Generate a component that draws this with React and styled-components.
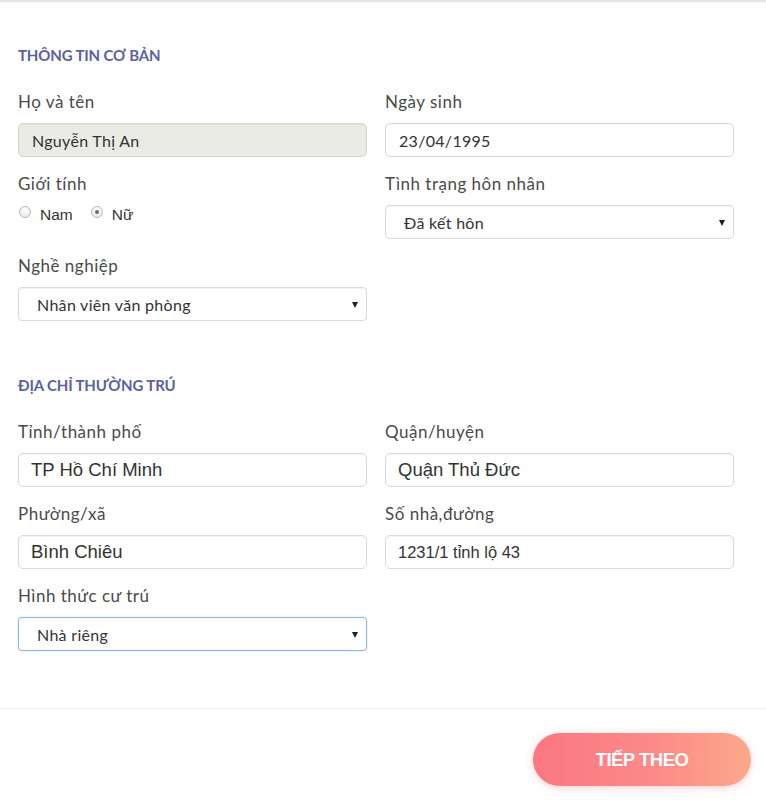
import React from "react";
import styled, { createGlobalStyle } from "styled-components";

const GlobalStyle = createGlobalStyle`
  body {
    margin: 0;
    background: #fff;
    font-family: "Lato", "Noto Sans", sans-serif;
  }
`;

const Page = styled.div`
  width: 766px;
  min-height: 800px;
  box-sizing: border-box;
  border-top: 2px solid #e4e4e4;
  box-shadow: inset 0 3px 3px -2px rgba(0, 0, 0, 0.05);
`;

const FormBody = styled.div`
  padding: 45px 32px 0 18px;
`;

const Section = styled.section`
  margin-bottom: ${(p) => p.$gap || 0}px;
`;

const SectionTitle = styled.h3`
  margin: 0 0 28px;
  font-size: 15px;
  line-height: 16px;
  font-weight: 700;
  letter-spacing: -0.15px;
  color: #5b5fa3;
  text-transform: uppercase;
`;

const Grid = styled.div`
  display: grid;
  grid-template-columns: 1fr 1fr;
  column-gap: 18px;
  row-gap: 16px;
`;

const Field = styled.div`
  display: flex;
  flex-direction: column;
`;

const Label = styled.label`
  font-size: 17px;
  line-height: 22px;
  letter-spacing: 0.5px;
  color: #4a4a4a;
  margin-bottom: 10px;
`;

const TextInput = styled.input`
  height: 34px;
  box-sizing: border-box;
  border: 1px solid #d9d9d9;
  border-radius: 5px;
  padding: 0 ${(p) => (p.$arial ? 12 : 13)}px;
  font-family: ${(p) =>
    p.$arial ? `"Liberation Sans", Arial, sans-serif` : `"Lato", sans-serif`};
  font-size: ${(p) => p.$size || 16}px;
  letter-spacing: ${(p) => (p.$arial ? 0 : 0.3)}px;
  color: #333;
  background: ${(p) => (p.disabled ? "#ebebe6" : "#fff")};
  box-shadow: inset 0 1px 1px rgba(0, 0, 0, 0.04);
  outline: none;
  &:disabled {
    border-color: #d6d6cf;
    color: #333;
  }
`;

const SelectWrap = styled.div`
  position: relative;
  &::after {
    content: "";
    position: absolute;
    right: 9px;
    top: 15px;
    border-left: 3.5px solid transparent;
    border-right: 3.5px solid transparent;
    border-top: 6px solid #222;
    pointer-events: none;
  }
`;

const Select = styled.select`
  width: 100%;
  height: 34px;
  box-sizing: border-box;
  appearance: none;
  border: 1px solid ${(p) => (p.$focused ? "#8fb6d8" : "#d9d9d9")};
  border-radius: 4px;
  padding: 0 18px;
  font-family: "Lato", sans-serif;
  font-size: 16px;
  letter-spacing: 0.3px;
  color: #333;
  background: #fff;
  box-shadow: ${(p) =>
    p.$focused ? "0 0 2px rgba(90, 150, 210, 0.35)" : "inset 0 1px 1px rgba(0,0,0,0.04)"};
  outline: none;
`;

const RadioRow = styled.div`
  display: flex;
  align-items: center;
  height: 34px;
  margin-top: -7px;
  padding-left: 1px;
`;

const RadioOption = styled.label`
  display: flex;
  align-items: center;
  font-size: 15.5px;
  color: #333;
  margin-right: 18px;
  font-family: "Liberation Sans", Arial, sans-serif;
`;

const Radio = styled.input`
  appearance: none;
  width: 12px;
  height: 12px;
  margin: -7px 9px 0 0;
  border-radius: 50%;
  border: 1px solid #b9b9b9;
  background: radial-gradient(circle at 50% 30%, #fff, #e3e3e3);
  position: relative;
  &:checked::after {
    content: "";
    position: absolute;
    left: 3px;
    top: 3px;
    width: 4px;
    height: 4px;
    border-radius: 50%;
    background: #6a6a6a;
  }
`;

const Divider = styled.hr`
  border: none;
  border-top: 1px solid #ececec;
  margin: 0;
`;

const Footer = styled.div`
  display: flex;
  justify-content: flex-end;
  padding: 24px 15px 0 0;
`;

const NextButton = styled.button`
  width: 218px;
  height: 53px;
  border: none;
  border-radius: 27px;
  background: linear-gradient(90deg, #fb7782 0%, #fc8a88 55%, #fda88b 100%);
  box-shadow: 0 2px 8px rgba(252, 130, 130, 0.35);
  color: #fff;
  font-family: "Liberation Sans", Arial, sans-serif;
  font-weight: 700;
  font-size: 18.5px;
  letter-spacing: -0.5px;
  cursor: pointer;
`;

const Dropdown = ({ value, focused }) => (
  <SelectWrap>
    <Select $focused={focused} defaultValue={value}>
      <option>{value}</option>
    </Select>
  </SelectWrap>
);

export default function App() {
  return (
    <Page>
      <GlobalStyle />
      <FormBody>
        <Section $gap={56}>
          <SectionTitle>Thông tin cơ bản</SectionTitle>
          <Grid>
            <Field>
              <Label>Họ và tên</Label>
              <TextInput disabled defaultValue="Nguyễn Thị An" />
            </Field>
            <Field>
              <Label>Ngày sinh</Label>
              <TextInput defaultValue="23/04/1995" />
            </Field>
            <Field>
              <Label>Giới tính</Label>
              <RadioRow>
                <RadioOption>
                  <Radio type="radio" name="gender" />
                  Nam
                </RadioOption>
                <RadioOption>
                  <Radio type="radio" name="gender" defaultChecked />
                  Nữ
                </RadioOption>
              </RadioRow>
            </Field>
            <Field>
              <Label>Tình trạng hôn nhân</Label>
              <Dropdown value="Đã kết hôn" />
            </Field>
            <Field>
              <Label>Nghề nghiệp</Label>
              <Dropdown value="Nhân viên văn phòng" />
            </Field>
          </Grid>
        </Section>

        <Section $gap={57}>
          <SectionTitle>Địa chỉ thường trú</SectionTitle>
          <Grid>
            <Field>
              <Label>Tỉnh/thành phố</Label>
              <TextInput $arial $size={18.5} defaultValue="TP Hồ Chí Minh" />
            </Field>
            <Field>
              <Label>Quận/huyện</Label>
              <TextInput $arial $size={18.5} defaultValue="Quận Thủ Đức" />
            </Field>
            <Field>
              <Label>Phường/xã</Label>
              <TextInput $arial $size={18.5} defaultValue="Bình Chiêu" />
            </Field>
            <Field>
              <Label>Số nhà,đường</Label>
              <TextInput $arial $size={16.5} defaultValue="1231/1 tỉnh lộ 43" />
            </Field>
            <Field>
              <Label>Hình thức cư trú</Label>
              <Dropdown value="Nhà riêng" focused />
            </Field>
          </Grid>
        </Section>
      </FormBody>
      <Divider />
      <Footer>
        <NextButton>TIẾP THEO</NextButton>
      </Footer>
    </Page>
  );
}
